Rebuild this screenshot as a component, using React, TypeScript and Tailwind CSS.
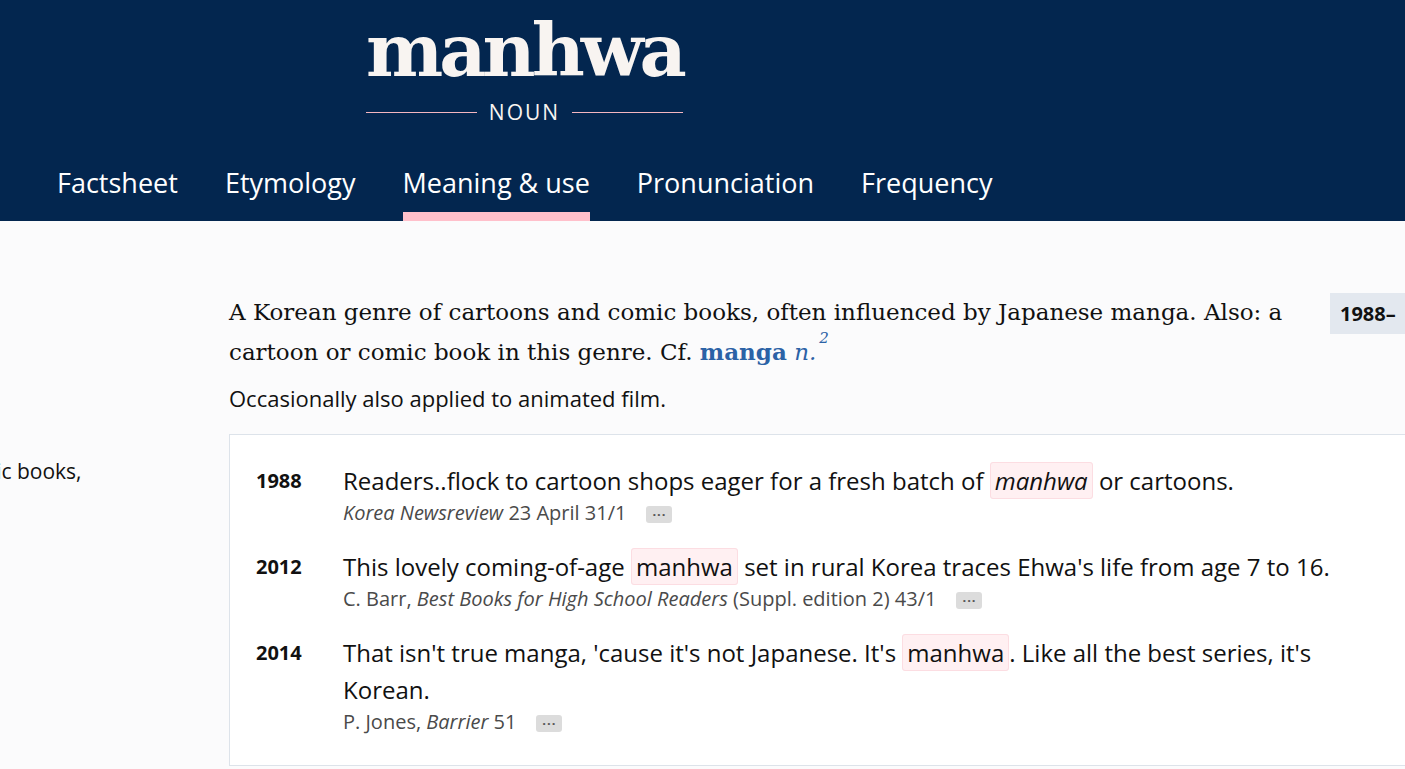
import * as React from 'react';

const sans = { fontFamily: '"Open Sans", "Noto Sans", sans-serif' };
const serif = { fontFamily: '"DejaVu Serif", "Liberation Serif", serif' };

function Mark({ children, italic }: { children: React.ReactNode; italic?: boolean }) {
  return (
    <span className={`rounded-[3px] border border-[#fcdde2] bg-[#fff0f2] px-[4px] py-[1px] ${italic ? 'italic' : ''}`}>
      {children}
    </span>
  );
}

function More() {
  return (
    <span className="ml-[20px] inline-flex h-[17px] w-[26px] items-center justify-center rounded-[3px] bg-[#dcdcdc] align-middle text-[13px] leading-none font-bold tracking-[1px] text-[#555]">
      ···
    </span>
  );
}

function Quote({ year, text, cite }: { year: string; text: React.ReactNode; cite: React.ReactNode }) {
  return (
    <div className="flex">
      <div className="w-[87px] shrink-0 text-[20px] leading-[37px] font-bold text-[#111]">{year}</div>
      <div className="w-[1010px] shrink-0">
        <p className="text-[24px] leading-[37px] text-[#111]">{text}</p>
        <p className="text-[20px] leading-[27px] text-[#4a4a4a]">{cite}</p>
      </div>
    </div>
  );
}

export default function App() {
  const tabs = ['Factsheet', 'Etymology', 'Meaning & use', 'Pronunciation', 'Frequency'];
  return (
    <div className="h-[769px] w-[1405px] overflow-hidden bg-[#fbfbfc]" style={sans}>
      <header className="flex h-[221px] flex-col bg-[#03264f]">
        <div className="flex flex-col pl-[366px] pt-[6px]">
          <div className="flex w-[317px] flex-col items-center">
            <h1 className="text-[73px] leading-[88px] font-bold tracking-[-4px] text-[#f8f4f1]" style={serif}>
              manhwa
            </h1>
            <div className="mt-[4px] flex w-full items-center gap-[12px]">
              <span className="h-px flex-1 bg-[#f4b6c0]" />
              <span className="text-[21px] leading-[28px] tracking-[2px] text-[#f8f4f1]">NOUN</span>
              <span className="h-px flex-1 bg-[#f4b6c0]" />
            </div>
          </div>
        </div>
        <nav className="mt-auto flex gap-[47px] pl-[57px]">
          {tabs.map((t) => (
            <div key={t} className="flex flex-col">
              <span className="text-[27px] leading-[38px] text-white">{t}</span>
              <span className={`mt-[10px] h-[9px] ${t === 'Meaning & use' ? 'bg-[#ffc0cb]' : ''}`} />
            </div>
          ))}
        </nav>
      </header>

      <main className="flex pt-[72px]">
        <aside className="w-[229px] shrink-0 overflow-hidden pt-[163px]">
          <p className="-ml-[46px] whitespace-nowrap text-[21px] leading-[30px] text-[#111]">comic books,</p>
        </aside>
        <section className="flex-1">
          <div className="flex">
            <div className="w-[1101px] shrink-0">
              <p className="text-[23px] leading-[39px] text-[#111]" style={serif}>
                A Korean genre of cartoons and comic books, often influenced by Japanese manga. Also: a cartoon or comic
                book in this genre. Cf. <span className="font-bold text-[#2b62a6]">manga</span>{' '}
                <span className="italic text-[#2b62a6]">n.</span>
                <sup className="ml-[3px] align-[10px] text-[15px] italic text-[#2b62a6]">2</sup>
              </p>
              <p className="mt-[11px] text-[22px] leading-[30px] text-[#111]">Occasionally also applied to animated film.</p>
            </div>
            <div className="h-[41px] shrink-0 bg-[#e3e8ef] px-[10px] text-[20px] leading-[41px] font-bold text-[#111]">
              1988–
            </div>
          </div>

          <div className="mt-[21px] flex w-[1220px] flex-col gap-[22px] border border-[#dde3ea] bg-white px-[26px] pt-[27px] pb-[30px]">
            <Quote
              year="1988"
              text={
                <>
                  Readers..flock to cartoon shops eager for a fresh batch of <Mark italic>manhwa</Mark> or cartoons.
                </>
              }
              cite={
                <>
                  <i>Korea Newsreview</i> 23 April 31/1
                  <More />
                </>
              }
            />
            <Quote
              year="2012"
              text={
                <>
                  This lovely coming-of-age <Mark>manhwa</Mark> set in rural Korea traces Ehwa's life from age 7 to 16.
                </>
              }
              cite={
                <>
                  C. Barr, <i>Best Books for High School Readers</i> (Suppl. edition 2) 43/1
                  <More />
                </>
              }
            />
            <Quote
              year="2014"
              text={
                <>
                  That isn't true manga, 'cause it's not Japanese. It's <Mark>manhwa</Mark>. Like all the best series, it's
                  Korean.
                </>
              }
              cite={
                <>
                  P. Jones, <i>Barrier</i> 51
                  <More />
                </>
              }
            />
          </div>
        </section>
      </main>
    </div>
  );
}
